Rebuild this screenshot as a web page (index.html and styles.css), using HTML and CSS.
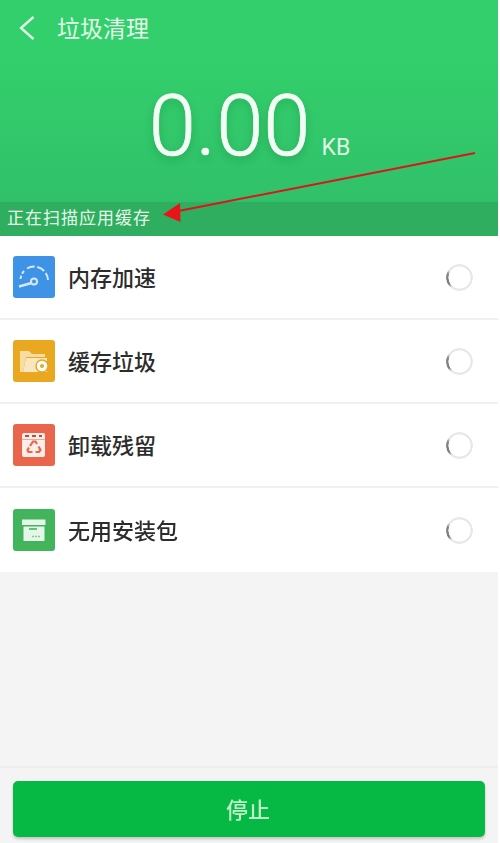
FILE: index.html
```html
<!DOCTYPE html>
<html lang="zh">
<head>
<meta charset="utf-8">
<title>垃圾清理</title>
<link rel="stylesheet" href="styles.css">
</head>
<body>
<div class="app">
  <section class="hero">
    <header class="bar">
      <svg class="back" viewBox="0 0 18 26" width="18" height="26"><path d="M15.500 2 L3 13 L15.500 24" fill="none" stroke="#dff7e6" stroke-width="2.400"/></svg>
      <h1 class="title">垃圾清理</h1>
    </header>
    <div class="amount"><span class="num">0.00</span><span class="unit">KB</span></div>
    <div class="status">正在扫描应用缓存</div>
  </section>
  <ul class="list">
    <li class="row">
      <span class="ico blue"><svg viewBox="0 0 42 42" width="42" height="42"><g fill="none" stroke="#d5e8fd" stroke-width="2"><path d="M7.500 23 A14 14 0 0 1 11 15" stroke-dasharray="3.500 2"/><path d="M14 12.500 A14 14 0 0 1 35 24" stroke-dasharray="8 2.500"/><circle cx="21" cy="25.500" r="3"/><path d="M18.500 27 L6 30.500" stroke-width="2.600"/></g></svg></span>
      <span class="name">内存加速</span><span class="spin"></span>
    </li>
    <li class="row">
      <span class="ico amber"><svg viewBox="0 0 42 42" width="42" height="42"><path d="M7 11 H16 L19 14 H32 V17 H13 L10 32 H7 Z" fill="#f6dda6"/><path d="M13 18 H34 V32 H10 Z" fill="#f9e6bd"/><circle cx="29" cy="26" r="6" fill="#fff" stroke="#e9a820" stroke-width="1.500"/><circle cx="29" cy="26" r="2" fill="#e9a820"/></svg></span>
      <span class="name">缓存垃圾</span><span class="spin"></span>
    </li>
    <li class="row">
      <span class="ico red"><svg viewBox="0 0 42 42" width="42" height="42"><rect x="9" y="9" width="23" height="24" rx="2" fill="#fdeee9"/><path d="M12 12 H29" stroke="#b8503c" stroke-width="2" stroke-dasharray="4 3"/><path d="M9 15.500 H32" stroke="#f3a797" stroke-width="1"/><g fill="none" stroke="#e9654c" stroke-width="2.200"><path d="M17 22 L20 17.500 H22.500 L24 20"/><path d="M25.500 22.500 L27.500 26 L26 28 H22.500"/><path d="M19.500 28 H15.500 L14.500 26 L16 23.500"/></g></svg></span>
      <span class="name">卸载残留</span><span class="spin"></span>
    </li>
    <li class="row">
      <span class="ico green"><svg viewBox="0 0 42 42" width="42" height="42"><rect x="9" y="10.500" width="23.500" height="5.500" fill="#e6f7ea"/><rect x="10.500" y="17.500" width="21" height="14.500" fill="#e6f7ea"/><path d="M16 20 H24" stroke="#41b45c" stroke-width="1.600"/><path d="M19 27.500 H28" stroke="#7fce93" stroke-width="1.600" stroke-dasharray="2 1"/></svg></span>
      <span class="name">无用安装包</span><span class="spin"></span>
    </li>
  </ul>
  <div class="space"></div>
  <footer class="foot"><button class="stop" type="button">停止</button></footer>
  <svg class="arrow" viewBox="0 0 500 843" width="500" height="843"><path d="M475 153 L176 211.500" stroke="#d9171b" stroke-width="2"/><path d="M163 214.500 L180 203 L180.500 222 Z" fill="#e8141a"/></svg>
</div>
</body>
</html>
```
FILE: styles.css
```css
* { box-sizing: border-box; }
html, body { margin: 0; height: 100%; background: #fff; }
body { font-family: "Noto Sans CJK SC", "Noto Sans", sans-serif; overflow: hidden; }
.app { position: relative; width: 498px; height: 843px; display: flex; flex-direction: column; background: #f4f4f4; filter: blur(.45px); }
.hero { height: 236px; display: flex; flex-direction: column; background: linear-gradient(#33cf6c 0, #33cf6c 60px, #30bd69 100%); }
.bar { height: 54px; display: flex; align-items: center; padding-left: 18px; gap: 21px; }
.back { display: block; margin-top: 2px; }
.title { margin: 0; font-size: 23px; font-weight: 400; color: #e4f8ea; line-height: 1; }
.amount { flex: 1; display: flex; align-items: baseline; justify-content: center; padding-left: 1px; }
.num { font-family: Roboto, sans-serif; font-weight: 300; font-size: 85px; line-height: 144px; color: #f3fdf5; -webkit-text-stroke: .7px #f3fdf5; text-shadow: 0 4px 8px rgba(0, 80, 40, .25); }
.unit { font-family: Roboto, sans-serif; font-size: 23px; color: #dff6e5; margin-left: 11px; }
.status { height: 34px; padding: 0 0 3px 7px; background: #2fae5f; color: #e6f8ea; font-size: 17px; line-height: 30px; letter-spacing: 1px; }
.list { margin: 0; padding: 0; list-style: none; background: #fff; }
.row { height: 84px; display: flex; align-items: center; padding: 0 25px 0 13px; border-bottom: 2px solid #f0f0f0; }
.row:last-child { border-bottom: 0; }
.ico { width: 42px; height: 42px; border-radius: 3px; flex: none; display: block; }
.ico svg { display: block; }
.blue { background: #3e93e6; }
.amber { background: #e9a820; }
.red { background: #e9654c; }
.green { background: #41b45c; }
.name { margin-left: 13px; padding-bottom: 3px; flex: 1; font-size: 22px; font-weight: 500; line-height: 1; color: #2c2c2c; }
.spin { width: 27px; height: 27px; border-radius: 50%; background: conic-gradient(#e8e8e8 0 220deg, #808080 240deg 285deg, #e8e8e8 305deg); -webkit-mask: radial-gradient(circle, transparent 10.800px, #000 11.300px); mask: radial-gradient(circle, transparent 10.800px, #000 11.300px); }
.space { flex: 1; }
.foot { height: 77px; border-top: 2px solid #eeeeee; padding: 13px 13px 0 13px; }
.stop { display: block; width: 100%; height: 56px; border: 0; border-radius: 5px; background: #06b944; color: #bff2c9; font-family: inherit; font-size: 22px; font-weight: 500; box-shadow: 0 2px 3px rgba(0, 0, 0, .2); padding: 0 2px 3px 0; }
.arrow { position: absolute; left: 0; top: 0; pointer-events: none; }
```
